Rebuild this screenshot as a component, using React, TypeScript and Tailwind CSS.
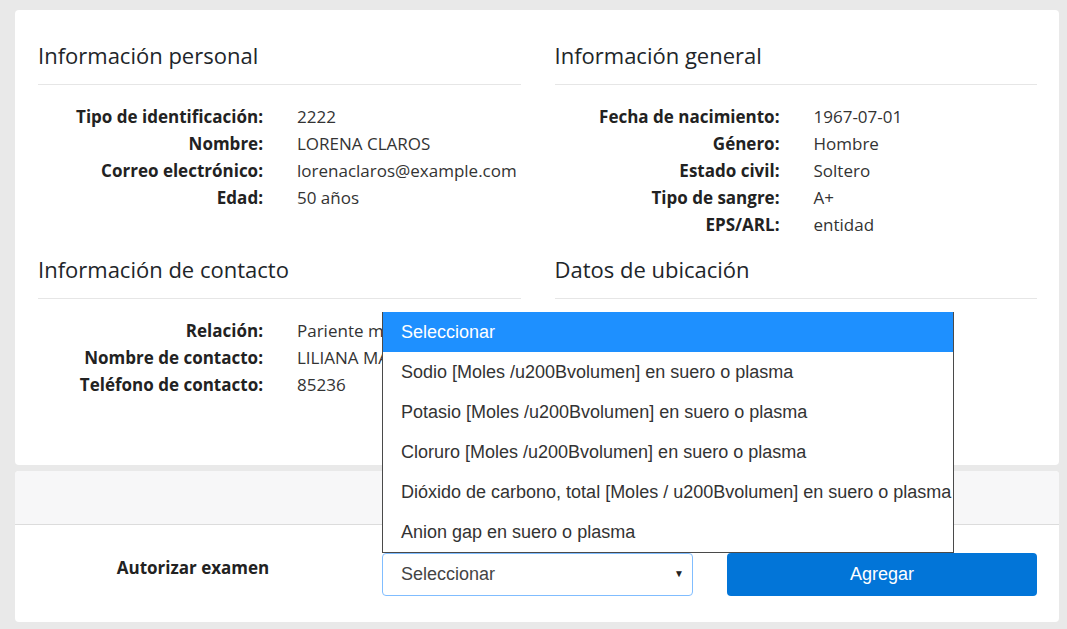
const personal = [
  ['Tipo de identificación:', '2222'],
  ['Nombre:', 'LORENA CLAROS'],
  ['Correo electrónico:', 'lorenaclaros@example.com'],
  ['Edad:', '50 años'],
];

const general = [
  ['Fecha de nacimiento:', '1967-07-01'],
  ['Género:', 'Hombre'],
  ['Estado civil:', 'Soltero'],
  ['Tipo de sangre:', 'A+'],
  ['EPS/ARL:', 'entidad'],
];

const contacto = [
  ['Relación:', 'Pariente más cercano'],
  ['Nombre de contacto:', 'LILIANA MARTINEZ'],
  ['Teléfono de contacto:', '85236'],
];

const examenes = [
  'Seleccionar',
  'Sodio [Moles /u200Bvolumen] en suero o plasma',
  'Potasio [Moles /u200Bvolumen] en suero o plasma',
  'Cloruro [Moles /u200Bvolumen] en suero o plasma',
  'Dióxido de carbono, total [Moles / u200Bvolumen] en suero o plasma',
  'Anion gap en suero o plasma',
];

function Section({ title, rows }: { title: string; rows: string[][] }) {
  return (
    <div className="mb-[16px]">
      <h2 className="text-[22px] leading-[30px] text-[#212529]">{title}</h2>
      <div className="mt-[14px] mb-[18px] h-px bg-[#e6e6e6]" />
      {rows.map(([label, value]) => (
        <div key={label} className="flex text-[17px] leading-[27px]">
          <div className="w-[225px] shrink-0 text-right font-bold text-[#222]">{label}</div>
          <div className="pl-[34px] text-[#333] whitespace-nowrap">{value}</div>
        </div>
      ))}
    </div>
  );
}

export default function App() {
  return (
    <div
      className="min-h-screen bg-[#e9e9e9] pl-[15px] pr-[8px] pt-[10px] pb-[7px] overflow-hidden"
      style={{ fontFamily: '"Open Sans", "Noto Sans", sans-serif' }}
    >
      {/* Datos del paciente */}
      <div className="bg-white rounded-[4px] h-[455px] pl-[23px] pr-[22px] pt-[30px]">
        <div className="grid grid-cols-2 gap-x-[34px]">
          <Section title="Información personal" rows={personal} />
          <Section title="Información general" rows={general} />
          <Section title="Información de contacto" rows={contacto} />
          <Section title="Datos de ubicación" rows={[]} />
        </div>
      </div>

      {/* Autorizar examen */}
      <div className="relative mt-[6px] bg-white rounded-[4px] h-[151px]">
        <div className="h-[54px] bg-[#f7f7f8] border-b border-[#dcdcdc] rounded-t-[4px]" />
        <div className="flex items-start gap-x-[34px] pl-[23px] pr-[22px] pt-[28px]">
          <div className="w-[310px] mt-[3px] text-center font-bold text-[17px] leading-[24px] text-[#222]">
            Autorizar examen
          </div>
          <div
            className="relative w-[311px] h-[43px] border border-[#80bdff] rounded-[4px] flex items-center pl-[18px] text-[18px] text-[#444]"
            style={{ fontFamily: '"Liberation Sans", Arial, sans-serif' }}
          >
            Seleccionar
            <span className="absolute right-[8px] top-[14px] text-[10px] leading-[12px] text-[#222]">▼</span>
            {/* Lista desplegada */}
            <div className="absolute left-[-1px] bottom-[42px] w-[572px] bg-white border border-[#4a4a4a] border-t-0 z-10">
              {examenes.map((e, i) => (
                <div
                  key={e}
                  className={
                    i === 0
                      ? 'h-[40px] flex items-center pl-[18px] bg-[#1e90ff] text-white whitespace-nowrap'
                      : 'h-[40px] flex items-center pl-[18px] text-[#333] whitespace-nowrap'
                  }
                >
                  {e}
                </div>
              ))}
            </div>
          </div>
          <button
            className="w-[310px] h-[43px] rounded-[4px] bg-[#0275d8] text-white text-[18px]"
            style={{ fontFamily: '"Liberation Sans", Arial, sans-serif' }}
          >
            Agregar
          </button>
        </div>
      </div>
    </div>
  );
}
